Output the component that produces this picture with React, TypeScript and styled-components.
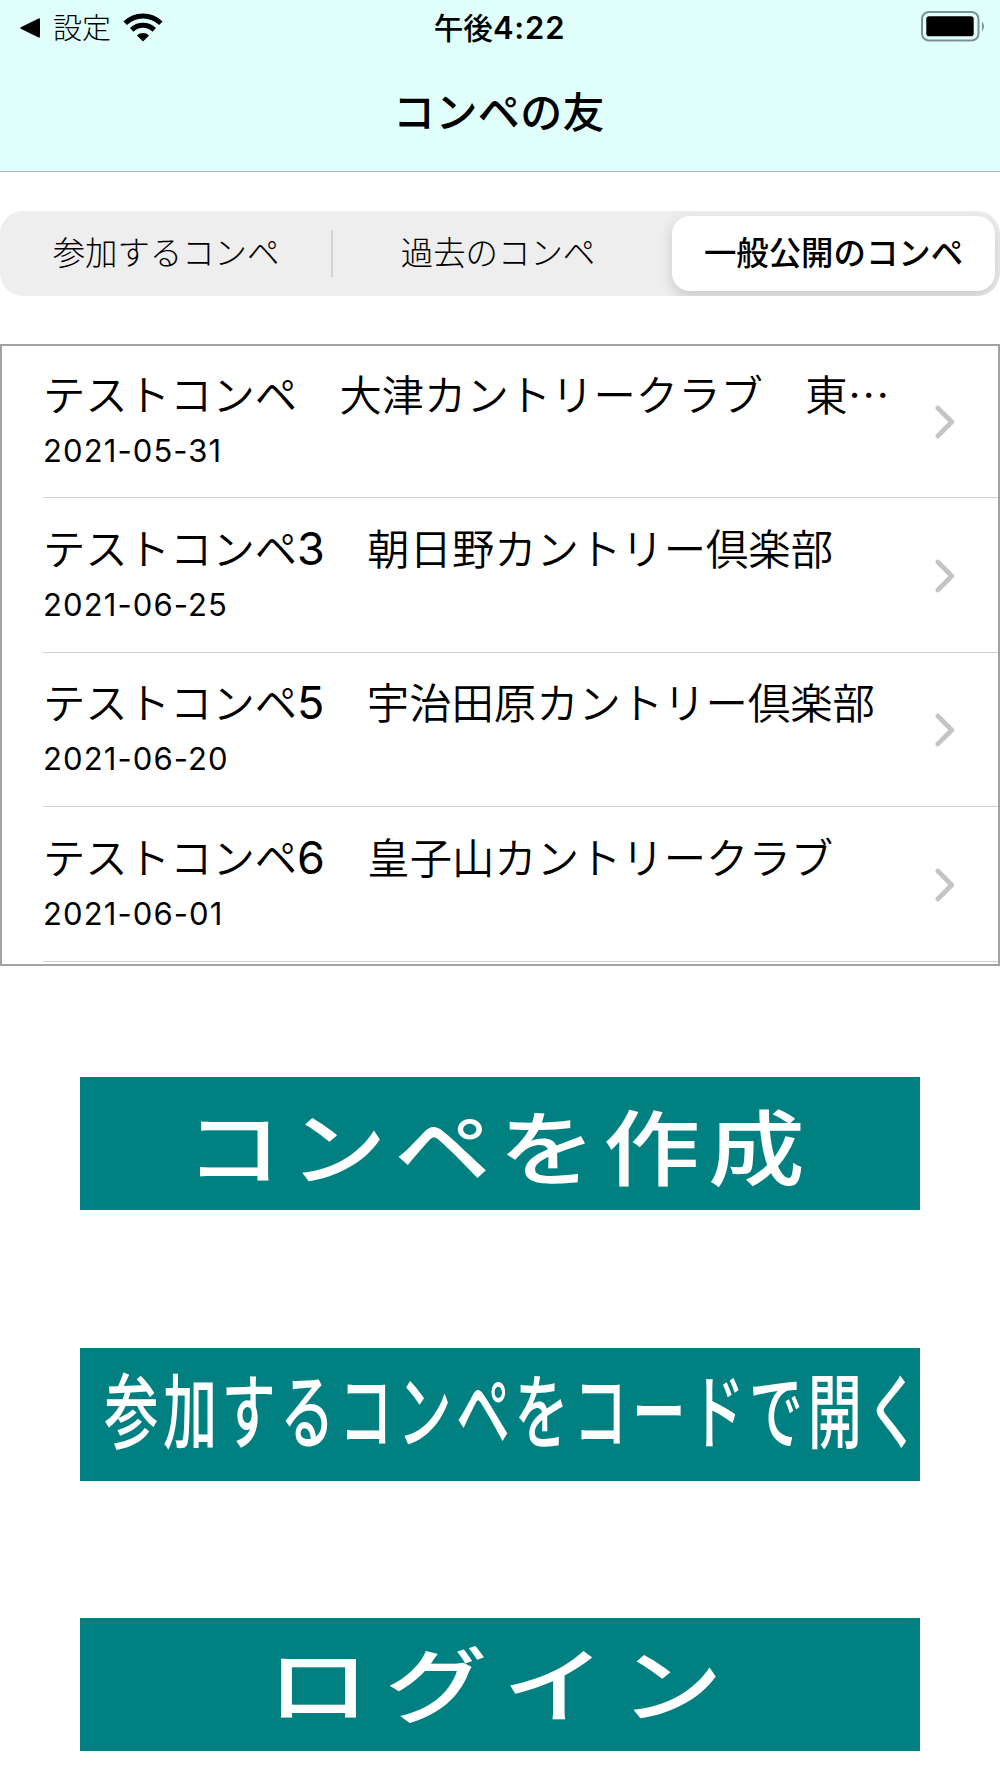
import React from "react";
import styled, { createGlobalStyle } from "styled-components";

const GlobalStyle = createGlobalStyle`
  * { box-sizing: border-box; }
  body {
    margin: 0;
    background: #fff;
    color: #000;
    font-family: "Noto Sans CJK JP", sans-serif;
  }
`;

const Screen = styled.div`
  width: 1000px;
  height: 1778px;
  overflow: hidden;
  display: flex;
  flex-direction: column;
  background: #fff;
`;

const Header = styled.header`
  height: 172px;
  flex: none;
  background: #e0fffa;
  border-bottom: 1px solid #adb9b7;
`;

const StatusBar = styled.div`
  height: 55px;
  padding: 0 15px 0 20px;
  display: grid;
  grid-template-columns: 1fr auto 1fr;
  align-items: center;
`;

const StatusLeft = styled.div`
  display: flex;
  align-items: center;
`;

const BackLabel = styled.span`
  height: 55px;
  margin: 0 12px 0 13px;
  font-size: 29px;
  line-height: 53px;
  font-weight: 300;
`;

const Clock = styled.div`
  display: flex;
  align-items: center;
  height: 54px;
  padding-right: 6px;
  font-size: 29.6px;
  font-weight: 500;
`;

const Meridiem = styled.span`
  height: 54px;
  line-height: 51px;
`;

const Digits = styled.span`
  font-family: Inter, sans-serif;
  font-size: 31px;
  font-weight: 600;
  letter-spacing: 0.8px;
`;

const StatusRight = styled.div`
  height: 53px;
  display: flex;
  align-items: center;
  justify-content: flex-end;
  align-self: start;
`;

const Title = styled.h1`
  margin: 0;
  height: 115px;
  line-height: 109px;
  text-align: center;
  font-size: 42px;
  font-weight: 500;
  letter-spacing: 0.4px;
  padding-right: 2px;
`;

const Segments = styled.nav`
  margin-top: 39px;
  height: 85px;
  flex: none;
  padding: 5px;
  display: grid;
  grid-template-columns: 326px 1px 1fr 323px;
  align-items: center;
  border-radius: 23px;
  background: #eee;
  overflow: hidden;
`;

const Divider = styled.span`
  width: 2px;
  height: 47px;
  background: #d1d1d6;
`;

const Segment = styled.button<{ $active?: boolean; $inset?: number }>`
  height: 75px;
  padding: 0 ${(p) => p.$inset ?? 0}px 5px 0;
  border: 0;
  border-radius: 18px;
  background: ${(p) => (p.$active ? "#fff" : "transparent")};
  box-shadow: ${(p) => (p.$active ? "0 5px 14px rgba(0,0,0,.16)" : "none")};
  color: #000;
  font-family: inherit;
  font-size: 32.4px;
  font-weight: ${(p) => (p.$active ? 500 : 300)};
  line-height: 70px;
  white-space: nowrap;
`;

const List = styled.ul`
  list-style: none;
  margin: 48px 0 0;
  padding: 0;
  height: 622px;
  flex: none;
  overflow: hidden;
  border: 2.5px solid #a3a3a3;
  display: flex;
  flex-direction: column;
`;

const Row = styled.li`
  flex: none;
  height: 154.6px;
  margin-left: 41px;
  padding: 2px 43px 0 0;
  border-bottom: 1.5px solid #d0d0d2;
  display: flex;
  align-items: center;
  justify-content: space-between;

  &:first-child {
    height: 152px;
    padding-top: 0;
  }
`;

const RowText = styled.div`
  height: 100px;
  display: flex;
  flex-direction: column;
`;

const Name = styled.span`
  height: 54px;
  line-height: 41px;
  font-size: 42.35px;
  font-weight: 350;
  white-space: nowrap;
`;

const NameDigit = styled.span`
  font-family: Inter, sans-serif;
  font-size: 45px;
  font-weight: 390;
  line-height: 0;
`;

const DateText = styled.span`
  height: 46px;
  line-height: 49px;
  font-family: Inter, sans-serif;
  font-size: 31px;
  font-weight: 390;
  letter-spacing: 1.1px;
`;

const Actions = styled.div`
  margin-top: 111px;
  padding: 0 80px;
  display: flex;
  flex-direction: column;
  gap: 137.5px;
`;

const Action = styled.button`
  height: 133px;
  width: 840px;
  padding: 0;
  border: 0;
  display: flex;
  align-items: center;
  justify-content: center;
  background: #008080;
  color: #fff;
  font-family: "Noto Sans CJK JP", sans-serif;
  font-weight: 500;
  font-size: 82px;
  line-height: 133px;
  white-space: nowrap;
`;

const Stretch = styled.span<{ $x: number; $gap: number; $dx: number; $dy: number }>`
  flex: none;
  letter-spacing: ${(p) => p.$gap}px;
  transform: translate(${(p) => p.$dx}px, ${(p) => p.$dy}px) scaleX(${(p) => p.$x});
`;

const BackTriangle = () => (
  <svg width="20" height="20" viewBox="0 0 20 20">
    <path d="M0.8 9.2 18.6 0.4Q20 0 20 1.4V18.6Q20 20 18.6 19.6L0.8 10.8Q-.4 10 .8 9.2Z" fill="#000" />
  </svg>
);

const Wifi = () => (
  <svg width="40" height="29" viewBox="0 0 40 29">
    <path d="M2.2 10.2A25.5 25.5 0 0 1 37.8 10.2" fill="none" stroke="#000" strokeWidth="5" />
    <path d="M8.7 16.9A16.2 16.2 0 0 1 31.3 16.9" fill="none" stroke="#000" strokeWidth="5" />
    <path d="M20 28.6 13.9 22.5A8.8 8.8 0 0 1 26.1 22.5Z" fill="#000" />
  </svg>
);

const Battery = () => (
  <svg width="64" height="31" viewBox="0 0 64 31">
    <rect x="1" y="1" width="56.5" height="28.5" rx="7" fill="none" stroke="#7f918e" strokeWidth="2" />
    <rect x="5.3" y="5.2" width="47.4" height="20" rx="2.8" fill="#000" />
    <path d="M61 10.5Q65 15.2 61 20.5Z" fill="#7f918e" />
  </svg>
);

const Chevron = () => (
  <svg width="20" height="34" viewBox="0 0 20 34">
    <path d="M2.8 3 16.8 17 2.8 31" fill="none" stroke="#c4c4c7" strokeWidth="4.6" strokeLinecap="round" strokeLinejoin="round" />
  </svg>
);

const competitions = [
  { name: "テストコンペ", no: "", club: "　大津カントリークラブ　東…", date: "2021-05-31" },
  { name: "テストコンペ", no: "3", club: "　朝日野カントリー倶楽部", date: "2021-06-25" },
  { name: "テストコンペ", no: "5", club: "　宇治田原カントリー倶楽部", date: "2021-06-20" },
  { name: "テストコンペ", no: "6", club: "　皇子山カントリークラブ", date: "2021-06-01" },
];

const actions = [
  { label: "コンペを作成", x: 1.18, gap: 6.6, dx: -1, dy: 0 },
  { label: "参加するコンペをコードで開く", x: 0.66, gap: 6.8, dx: 15, dy: -8 },
  { label: "ログイン", x: 1.25, gap: 12.2, dx: 2, dy: -4 },
];

export default function App() {
  return (
    <Screen lang="ja">
      <GlobalStyle />
      <Header>
        <StatusBar>
          <StatusLeft>
            <BackTriangle />
            <BackLabel>設定</BackLabel>
            <Wifi />
          </StatusLeft>
          <Clock>
            <Meridiem>午後</Meridiem>
            <Digits>4:22</Digits>
          </Clock>
          <StatusRight>
            <Battery />
          </StatusRight>
        </StatusBar>
        <Title>コンペの友</Title>
      </Header>
      <Segments>
        <Segment $inset={4}>参加するコンペ</Segment>
        <Divider />
        <Segment $inset={8}>過去のコンペ</Segment>
        <Segment $active>一般公開のコンペ</Segment>
      </Segments>
      <List>
        {competitions.map((c) => (
          <Row key={c.date}>
            <RowText>
              <Name>
                {c.name}
                {c.no && <NameDigit>{c.no}</NameDigit>}
                {c.club}
              </Name>
              <DateText>{c.date}</DateText>
            </RowText>
            <Chevron />
          </Row>
        ))}
      </List>
      <Actions>
        {actions.map((a) => (
          <Action key={a.label}>
            <Stretch $x={a.x} $gap={a.gap} $dx={a.dx} $dy={a.dy}>
              {a.label}
            </Stretch>
          </Action>
        ))}
      </Actions>
    </Screen>
  );
}
